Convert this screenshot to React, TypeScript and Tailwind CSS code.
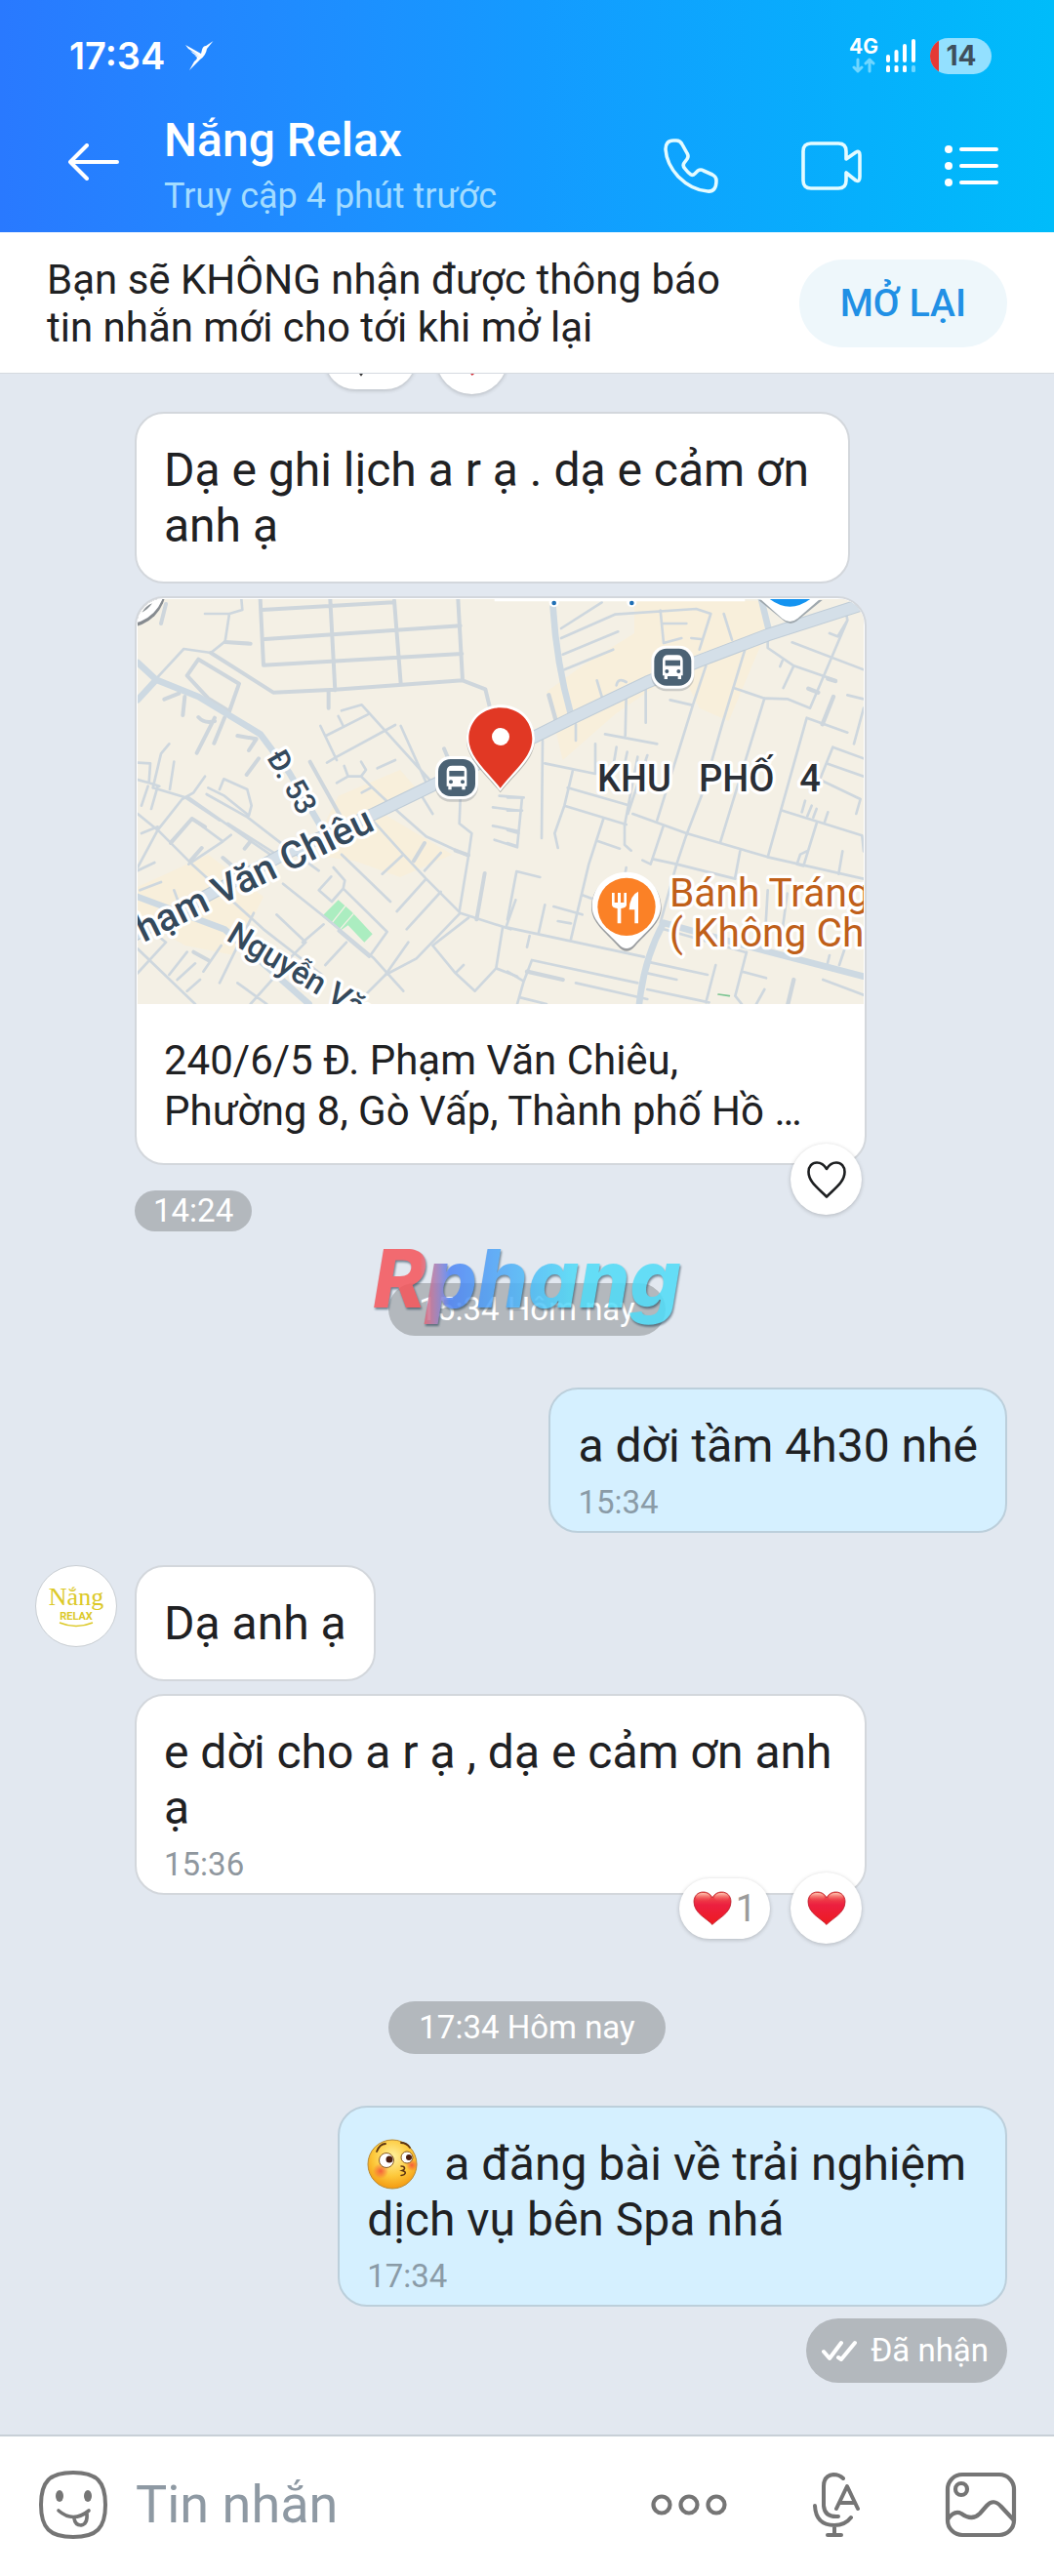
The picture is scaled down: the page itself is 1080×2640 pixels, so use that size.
import React from 'react';

// Outline heart used on the "like" button
const HeartOutline = () => (
  <svg viewBox="0 0 40 38" className="h-[38px] w-[40px]" fill="none" stroke="#1d1f21" strokeWidth="2.6" strokeLinejoin="round">
    <path d="M20 8C17 3 13 1.500 10 1.500C5 1.500 1.500 5.500 1.500 11C1.500 21 11 27.500 20 36.500C29 27.500 38.500 21 38.500 11C38.500 5.500 35 1.500 30 1.500C27 1.500 23 3 20 8Z" />
  </svg>
);

const RedHeart = () => (
  <svg viewBox="0 0 40 35" className="h-[35px] w-[40px]">
    <defs>
      <linearGradient id="heartBody" x1="0" y1="0" x2="0" y2="1">
        <stop offset="0" stopColor="#f0604f" />
        <stop offset="0.4" stopColor="#ec1f40" />
        <stop offset="1" stopColor="#ee1a1f" />
      </linearGradient>
      <linearGradient id="heartShine" x1="0" y1="0" x2="0" y2="1">
        <stop offset="0" stopColor="#ffc9b5" />
        <stop offset="1" stopColor="#f0404c" stopOpacity="0" />
      </linearGradient>
    </defs>
    <path
      d="M20 34.500C15 28.500 1 23 1 11C1 5 5 1 10.500 1C15 1 18.500 3.500 20 7C21.500 3.500 25 1 29.500 1C35 1 39 5 39 11C39 23 25 28.500 20 34.500Z"
      fill="url(#heartBody)"
      stroke="#b9202c"
      strokeWidth="0.8"
    />
    <ellipse cx="10.500" cy="6.500" rx="7.500" ry="4.500" fill="url(#heartShine)" />
    <ellipse cx="29.500" cy="6.500" rx="7.500" ry="4.500" fill="url(#heartShine)" />
  </svg>
);

const KissEmoji = () => (
  <svg viewBox="0 0 52 52" className="mr-[27px] inline-block h-[52px] w-[52px] align-[-10px]">
    <defs>
      <radialGradient id="face" cx="0.5" cy="0.35" r="0.65">
        <stop offset="0" stopColor="#fff3a0" />
        <stop offset="0.6" stopColor="#fdc83a" />
        <stop offset="1" stopColor="#f39a12" />
      </radialGradient>
      <radialGradient id="blush">
        <stop offset="0" stopColor="#f4533a" stopOpacity="0.9" />
        <stop offset="1" stopColor="#f4533a" stopOpacity="0" />
      </radialGradient>
    </defs>
    <circle cx="26" cy="26" r="25" fill="url(#face)" stroke="#b98a35" strokeWidth="1" />
    <circle cx="14" cy="33" r="8" fill="url(#blush)" />
    <circle cx="46" cy="27" r="6" fill="url(#blush)" />
    <circle cx="20" cy="22" r="7.500" fill="#fff" stroke="#8a5a1c" strokeWidth="1" />
    <circle cx="41" cy="19" r="6" fill="#fff" stroke="#8a5a1c" strokeWidth="1" />
    <circle cx="23" cy="21" r="3.500" fill="#4a1d10" />
    <circle cx="43" cy="19" r="3" fill="#4a1d10" />
    <path d="M10 13C12 8 15 5 19 5M35 4C39 4 42 6 44 9" fill="none" stroke="#5b3312" strokeWidth="1.800" strokeLinecap="round" />
    <path d="M35 28C39 28 40 31 36 32.500C41 33.500 40 37 35 37.500" fill="none" stroke="#5b3312" strokeWidth="1.500" strokeLinecap="round" />
  </svg>
);

const BusMarker = ({ x, y }: { x: number; y: number }) => (
  <g transform={`translate(${x} ${y})`}>
    <rect x="-66" y="-60" width="132" height="134" rx="46" fill="#7d8790" opacity="0.35" />
    <rect x="-66" y="-66" width="132" height="132" rx="46" fill="#fff" />
    <rect x="-57" y="-57" width="114" height="114" rx="38" fill="#4b6274" />
    <path d="M-31 -20Q-31 -37 -14 -37H14Q31 -37 31 -20V26H26V37H16V28H-16V37H-26V26H-31Z" fill="#fff" />
    <rect x="-23" y="-21" width="46" height="17" fill="#4b6274" />
    <circle cx="-18" cy="13" r="6" fill="#4b6274" />
    <circle cx="18" cy="13" r="6" fill="#4b6274" />
  </g>
);

// Static map preview
const MapPreview = () => (
  <svg viewBox="33 45 2232 1245" className="block w-full font-['Roboto',sans-serif]" role="img" aria-label="Bản đồ">
    <rect x="33" y="45" width="2232" height="1245" fill="#f4f0e5" />
    {/* built-up areas */}
    <g fill="#f8efdb">
      <path d="M650 650L840 570L900 640L780 700L1000 830L840 900L700 850L560 830Z" />
      <path d="M33 930L250 830L420 960L330 1140L180 1110L33 1030Z" />
      <path d="M1330 500L1290 330L1400 250L1560 150L1560 50L1960 50L1960 160L1850 420L1760 380L1700 260L1500 400L1340 540Z" />
    </g>
    <path d="M600 1020L650 970L690 1005L755 1075L730 1100L680 1048L655 1065Z" fill="#abedc0" />
    <path d="M629 1042L672 988M655 1060L697 1012" stroke="#f4f0e5" strokeWidth="4" />

    <g fill="none" strokeLinecap="round" strokeLinejoin="round">
      {/* thin lanes, west half */}
      <g stroke="#ced7de" strokeWidth="8">
        <path d="M240 90H315L355 78L352 45M315 90L302 175L258 210L175 198L90 290" />
        <path d="M595 435L645 540M612 465L740 400M645 530L825 432M660 388L722 370L930 600M650 405L665 435M615 548L645 530M842 435L925 620" />
        <path d="M668 558L680 590L645 610M680 590L720 590L735 570L720 545M720 590L750 620L835 700L920 775L1050 835M770 565L825 540M722 640L750 625" />
        <path d="M33 548L72 550L68 610L33 600M130 490L105 520L80 625M145 545L132 630M80 625L180 655L285 725M95 620L75 690M65 620L45 680M68 610L100 620" />
        <path d="M33 705L95 755L170 660L205 640L240 590M95 755L200 860L420 1060L600 1200M45 765L95 745M190 655L375 785L470 850" />
        <path d="M250 625L300 650L375 710L383 680L370 630L298 598L285 630M245 645L370 715L480 800L590 880M310 735L460 830" />
        <path d="M135 790L200 720L295 790L320 770M190 860L295 790M33 870L95 755M33 880L85 855M40 940L105 915M145 940L160 980M390 1010L285 1225" />
        <path d="M635 870L670 910L665 935L630 975L590 940L628 898M665 935L800 1068L745 1145L650 1065M480 920L605 1020L760 1150L850 1250M540 1100L605 1045M610 1170L675 1100M460 1015L550 1100L500 1150" />
        <path d="M760 730L850 830L920 905L1025 1010L1180 1060M850 830L785 890M660 830L810 975M965 825L915 880M920 905L830 1005M965 945L860 1060M1025 1010L890 1150L795 1200L730 1265" />
        <path d="M1025 660L1022 735L1060 765L1050 835L1022 1005M1050 1025L940 1110L1010 1195L1070 1250L1135 1180L1155 1055M1010 1195L1035 1170M1195 970L1165 1055M1135 1180L1200 1205" />
        <path d="M900 640L940 705M1125 685L1200 695M1125 742L1200 758M1130 785L1200 808M1145 650L1220 655" />
        <path d="M33 1120L210 1290M33 1195L120 1100L95 1080M130 1200L185 1130M155 1215L210 1165M185 1250L225 1215M235 1190L290 1110M340 1225L430 1290M380 1290L460 1200M865 1100L795 1200" />
      </g>
      {/* block grid and medium lanes */}
      <g stroke="#ced6dc" strokeWidth="12">
        <path d="M410 45L420 248L1030 213M415 78L820 55M425 168L1025 127M625 45L640 325M822 50L842 305M1018 45L1032 295M258 210L450 332L640 323L1032 295L1102 322L1115 375M620 330V380" />
        <path d="M220 230L345 305L315 390L250 350L185 280ZM270 410L215 518M300 410L268 488M220 408Q240 430 270 420M178 345L172 402M115 353L160 335M340 465L398 475L375 510M405 535L368 585M302 177L380 182" />
        <path d="M563 545L655 710M915 795L882 850M1100 888L1075 1030M240 745L200 720L135 795M230 810L195 850M295 840L330 870M380 790L362 812M120 60L105 120M975 505L990 540M1010 818L1050 832M205 1130L250 1155" />
      </g>
      {/* thin lanes, east half */}
      <g transform="translate(1170 0)" stroke="#ced7de" strokeWidth="8">
        <path d="M165 135L290 55M165 165L330 92L580 75L625 90L590 200M170 215L340 145M175 262L325 200M470 80L480 180M480 120H550M480 180L535 165M565 165L595 168" />
        <path d="M665 90L690 170M730 200L660 430L600 640L550 770M610 250L570 370L460 725M500 355L565 370M275 295L290 345M335 310Q340 285 365 300M365 345L362 465M300 460L460 490M425 320V425M210 430V480" />
        <path d="M108 480L105 780M115 550L270 582M200 575L175 680L145 765L155 810M185 625L370 678M175 680L365 738M270 490V580M335 500L325 560M368 515L350 600M400 530L360 740V800L380 818M430 525L370 705" />
        <path d="M385 705L550 765L800 838L1095 905M480 740L440 860L415 848M295 720L250 860L195 1090M280 790L345 812M450 845L520 860L470 1040M520 860L700 905M550 770L520 860M715 820L700 900" />
        <path d="M695 318L790 350L860 352L930 380L1045 110L1040 80M790 350L655 790M1045 110L1015 160L990 150M800 170V195L880 250L1010 295M875 178L1095 262M880 250L848 318M845 235L838 252" />
        <path d="M920 410L1045 455M920 410L800 838M1045 340L1095 352M1095 380L1065 490M1000 500L1095 535M1000 500L960 600M980 550L1095 590M960 600L1085 660L1072 705M845 695L1090 772L1095 820M950 735L910 865L890 860L900 830L920 820M1030 820L1018 890" />
        <path d="M915 665L905 700M935 680L922 712M950 690L940 716M985 700L975 730M0 1055L420 1145M68 1080L60 1115M28 882L0 1030M28 882L100 900M115 985L95 1075M142 990L230 1015M155 1035L195 1042M230 955L270 970" />
        <path d="M0 1190L50 1220L30 1290M75 1155L400 1225M75 1155L50 1220M210 1225L430 1275M40 1270L120 1290M430 1160L615 1200M430 1195L520 1215M430 1245L620 1285M640 1170L610 1285M735 1130L700 1265L720 1290M720 1190L795 1210M970 1215L1095 1262M790 1245L765 1290" />
        <path d="M480 1060L730 1130M800 940L790 1110M860 950L840 1100M990 1140L980 1180M1040 1110L1020 1170M0 655H45L30 805L0 795M0 695H45M0 755L35 765M365 870L360 900" />
      </g>
      <g transform="translate(1170 0)" stroke="#ced6dc" strokeWidth="13">
        <path d="M127 340L148 415M925 320L955 332M985 290L1008 297M1002 345L968 430M60 1190L170 1215M880 1215L862 1290" />
      </g>
      {/* streets */}
      <g stroke="#cdd9e2" strokeWidth="20">
        <path d="M33 240L90 293L220 345L410 460L500 580L600 750M90 293L33 355M33 960L300 1060L560 1290" />
        <path d="M1310 70Q1320 240 1365 400M1950 45L1972 135M1575 1290Q1590 1150 1650 1040L1900 1110L2265 1205" />
      </g>
      <path d="M0 1090L480 830L760 705L945 615L1260 465L1370 410L1600 300L1760 235L1970 155L2280 55" stroke="#bfccd7" strokeWidth="40" />
      <path d="M0 1090L480 830L760 705L945 615L1260 465L1370 410L1600 300L1760 235L1970 155L2280 55" stroke="#d4dfe8" strokeWidth="34" />
      <path d="M1818 1260L1852 1265" stroke="#7cc592" strokeWidth="5" />
    </g>

    {/* markers cut by the top edge */}
    <circle cx="0" cy="12" r="120" fill="#868b90" />
    <circle cx="0" cy="5" r="116" fill="#fff" />
    <path d="M46 86Q66 76 78 58Q58 66 46 86Z" fill="#8c9296" />
    <path d="M1130 45H1900V52H1130Z" fill="#fff" />
    <circle cx="1313" cy="55" r="15" fill="#fff" />
    <circle cx="1552" cy="55" r="15" fill="#fff" />
    <circle cx="1313" cy="57" r="7" fill="#1f6fb5" />
    <circle cx="1552" cy="57" r="7" fill="#1f6fb5" />
    <path d="M1942 48L2020 112Q2040 128 2060 112L2138 48Z" fill="#9fa8ae" />
    <path d="M1942 40L2014 104Q2038 124 2062 104L2136 40Z" fill="#fff" />
    <path d="M1975 44Q2038 92 2102 44Z" fill="#1493f0" />

    <g fill="#34495c" stroke="#fff" strokeWidth="20" strokeLinejoin="round" paintOrder="stroke" fontWeight="500">
      <text transform="translate(428 532) rotate(60)" fontSize="92">Đ. 53</text>
      <text transform="translate(-16 1134) rotate(-26)" fontSize="118">Phạm Văn Chiêu</text>
      <text transform="translate(302 1092) rotate(31)" fontSize="98">Nguyễn Văn</text>
    </g>
    <g fill="#2b2f36" stroke="#fff" strokeWidth="20" strokeLinejoin="round" paintOrder="stroke" fontWeight="500" fontSize="114">
      <text y="635">
        <tspan x="1446">KHU</tspan> <tspan x="1758">PHỐ</tspan> <tspan x="2068">4</tspan>
      </text>
    </g>
    <g fill="#c0601a" stroke="#fff" strokeWidth="20" strokeLinejoin="round" paintOrder="stroke" fontSize="122">
      <text x="1668" y="990">Bánh Tráng</text>
      <text x="1668" y="1113">( Không Ch</text>
    </g>

    <BusMarker x={1014} y={594} />
    <BusMarker x={1678} y={254} />

    {/* place pin */}
    <path d="M1536 888C1595 888 1643 934 1643 994C1643 1040 1600 1070 1562 1112Q1536 1142 1510 1112C1472 1070 1428 1040 1428 994C1428 934 1477 888 1536 888Z" fill="#9a9da0" />
    <path d="M1536 884C1595 884 1641 930 1641 990C1641 1035 1598 1066 1560 1106Q1536 1132 1512 1106C1474 1066 1430 1035 1430 990C1430 930 1477 884 1536 884Z" fill="#fff" />
    <circle cx="1536" cy="991" r="89" fill="#fb8126" />
    <path d="M1491 948V985Q1491 994 1508 996V1042H1519V996Q1536 994 1536 985V948H1528V978H1518V948H1509V978H1499V948ZM1572 944Q1546 955 1544 1000H1561V1042H1572Z" fill="#fff" />

    {/* selected location */}
    <path d="M1148 374C1210 374 1254 420 1254 478C1254 540 1190 585 1148 640C1106 585 1044 540 1044 478C1044 420 1088 374 1148 374Z" fill="#8d8d88" opacity="0.6" />
    <path d="M1148 370C1210 370 1254 416 1254 474C1254 534 1190 580 1148 636C1106 580 1044 534 1044 474C1044 416 1088 370 1148 370Z" fill="#fff" />
    <path d="M1148 379C1205 379 1246 420 1246 474C1246 530 1190 572 1148 626C1106 572 1051 530 1051 474C1051 420 1092 379 1148 379Z" fill="#e13824" />
    <circle cx="1149" cy="468" r="27" fill="#fff" />
  </svg>
);

const ReactionBar = ({ children }: { children: React.ReactNode }) => (
  <div className="flex items-center gap-[21px]">{children}</div>
);

const ReactionCount = ({ children }: { children: React.ReactNode }) => (
  <button className="flex h-[62px] min-w-[93px] items-center justify-center gap-1 rounded-full bg-white text-[38px] leading-none text-[#9b9b9b] shadow-[0_1px_4px_rgba(0,0,0,0.22)]">
    {children}
  </button>
);

const ReactionButton = ({ label, children }: { label: string; children: React.ReactNode }) => (
  <button aria-label={label} className="flex size-[73px] items-center justify-center rounded-full bg-white shadow-[0_1px_4px_rgba(0,0,0,0.22)]">
    {children}
  </button>
);

interface BubbleProps {
  children: React.ReactNode;
  time?: string;
  mine?: boolean;
  reactions?: React.ReactNode;
}

const Bubble = ({ children, time, mine, reactions }: BubbleProps) => (
  <div
    className={`relative w-fit max-w-[750px] rounded-[30px] border-2 px-7 pt-[29px] ${time ? 'pb-[9px]' : 'pb-[29px]'} ${
      mine ? 'border-[#bccfdb] bg-[#d5f0ff]' : 'border-[#d3d7dc] bg-white'
    }`}
  >
    <p className="text-[48px] leading-[57px] whitespace-pre-line text-[#1f2123]">{children}</p>
    {time && <time className={`mt-[10px] block text-[33px] leading-[40px] ${mine ? 'text-[#8a9ba7]' : 'text-[#8f979e]'}`}>{time}</time>}
    {reactions && <div className="absolute right-[3px] -bottom-[52px]">{reactions}</div>}
  </div>
);

const DayChip = ({ children }: { children: React.ReactNode }) => (
  <span className="rounded-full bg-[#b3b8bd] px-[31px] text-[33px] leading-[54px] text-white">{children}</span>
);

const Header = () => (
  <header className="bg-linear-to-r from-[#2979ff] via-[#149aff] to-[#00bcfa] text-white">
    <div className="flex h-[114px] items-center pr-16 pl-[71px]">
      <span className="font-['Inter',sans-serif] text-[38px] leading-none font-semibold">17:34</span>
      <svg viewBox="0 0 30 30" className="ml-5 h-[30px] w-[30px]" fill="#fff">
        <path d="M29.500 0L22 5Q19 5 18 9L17 13L1 4L4 8L15 15L6 10L9 13L16 17L10 14L13 17Q13 19 10 21L5 30L16 19Q22 15 23 8Z" />
      </svg>
      <div className="ml-auto flex items-center">
        <div className="flex flex-col items-center">
          <span className="font-['Inter',sans-serif] text-[21px] leading-[18px] font-bold">4G</span>
          <svg viewBox="0 0 24 16" className="mt-0.5 h-4 w-6" fill="none" stroke="#6fd6ff" strokeWidth="3" strokeLinecap="round" strokeLinejoin="round">
            <path d="M6 2V14M2 10L6 14L10 10M18 14V2M14 6L18 2L22 6" />
          </svg>
        </div>
        <svg viewBox="0 0 30 34" className="ml-2 h-[34px] w-[30px]" fill="#fff">
          <rect x="0" y="16" width="4" height="8" rx="2" />
          <rect x="8.500" y="11" width="4" height="13" rx="2" />
          <rect x="17" y="5" width="4" height="19" rx="2" />
          <rect x="26" y="0" width="4" height="24" rx="2" />
          <rect x="0" y="27" width="4" height="7" rx="1.500" />
          <rect x="8.500" y="27" width="4" height="7" rx="1.500" />
          <rect x="17" y="27" width="4" height="7" rx="1.500" />
          <rect x="26" y="27" width="4" height="7" rx="1.500" fill="#6fd6ff" />
        </svg>
        <div className="ml-[15px] flex h-[37px] w-[63px] overflow-hidden rounded-full bg-[#93e0ff]">
          <div className="w-[9px] bg-[#e53935]" />
          <span className="flex-1 pr-2 text-center font-['Inter',sans-serif] text-[28px] leading-[37px] font-bold text-[#3f4f5c]">14</span>
        </div>
      </div>
    </div>

    <div className="flex h-[124px] items-start pr-14 pl-[70px]">
      <button aria-label="Quay lại" className="mt-[33px]">
        <svg viewBox="0 0 52 38" className="h-[38px] w-[52px]" fill="none" stroke="#fff" strokeWidth="4" strokeLinecap="round" strokeLinejoin="round">
          <path d="M50 19H2M19 2L2 19L19 36" />
        </svg>
      </button>
      <div className="ml-[46px] flex-1">
        <h1 className="mt-[2px] text-[48px] leading-[56px] font-medium">Nắng Relax</h1>
        <p className="text-[36px] leading-[58px] text-[#a3dcff]">Truy cập 4 phút trước</p>
      </div>
      <div className="mt-7 flex items-center">
        <button aria-label="Gọi thoại">
          <svg viewBox="0 0 56 56" className="h-14 w-14" fill="none" stroke="#e4fbff" strokeWidth="3.600" strokeLinejoin="round">
            <path d="M10 2H13Q17 2 19 6L24 15Q26 18 24 21L21 25Q19 28 22 31Q25 35 28 37Q30 38 32 36L35 33Q38 31 41 33L50 37Q54 39 54 43Q54 55 45 54Q29 53 15 39Q3 26 2 11Q2 2 10 2Z" />
          </svg>
        </button>
        <button aria-label="Gọi video" className="ml-[85px]">
          <svg viewBox="0 0 62 50" className="h-[50px] w-[62px]" fill="none" stroke="#e4fbff" strokeWidth="3.600" strokeLinejoin="round">
            <path d="M10 2H38Q46 2 46 10V18L56 11Q60 9 60 14V36Q60 42 56 40L46 32V40Q46 48 38 48H10Q2 48 2 40V10Q2 2 10 2Z" />
          </svg>
        </button>
        <button aria-label="Tùy chọn" className="ml-[85px]">
          <svg viewBox="0 0 56 42" className="h-[42px] w-14" fill="#fff" stroke="#fff" strokeLinecap="round">
            <circle cx="4" cy="4" r="4" stroke="none" />
            <circle cx="4" cy="21" r="4" stroke="none" />
            <circle cx="4" cy="38" r="4" stroke="none" />
            <path d="M17 4H53M17 21H53M17 38H53" strokeWidth="4" />
          </svg>
        </button>
      </div>
    </div>
  </header>
);

const MuteNotice = () => (
  <section className="flex items-center justify-between gap-6 border-b border-[#d5dae0] bg-white pt-6 pr-12 pb-[22px] pl-12">
    <p className="max-w-[700px] text-[42px] leading-[49px] text-[#1f2123]">
      Bạn sẽ KHÔNG nhận được thông báo tin nhắn mới cho tới khi mở lại
    </p>
    <button className="h-[90px] shrink-0 rounded-full bg-[#eef7fb] px-[42px] text-[39px] leading-none font-medium text-[#2190e5]">MỞ LẠI</button>
  </section>
);

const Avatar = () => (
  <div className="flex size-[84px] shrink-0 flex-col items-center rounded-full border border-[#c9ced3] bg-white pt-[18px] text-[#dcc928]">
    <span className="font-['Liberation_Serif',serif] text-[26px] leading-[28px]">Nắng</span>
    <span className="text-[11px] leading-[11px] font-bold">RELAX</span>
    <svg viewBox="0 0 36 6" className="h-1.5 w-9" fill="none" stroke="currentColor" strokeWidth="1.500">
      <path d="M1 1Q18 8 35 1" />
    </svg>
  </div>
);

const Composer = () => (
  <footer className="flex h-[145px] items-center border-t-2 border-[#c8d0d7] bg-white pr-[38px] pb-1 pl-[39px]">
    <button aria-label="Biểu cảm">
      <svg viewBox="0 0 72 72" className="size-[72px]" fill="none" stroke="#757575" strokeWidth="4" strokeLinecap="round">
        <path d="M36 3C60 3 69 12 69 36C69 60 60 69 36 69C12 69 3 60 3 36C3 12 12 3 36 3Z" />
        <ellipse cx="22" cy="27" rx="4" ry="6" fill="#757575" stroke="none" />
        <ellipse cx="51" cy="27" rx="4" ry="6" fill="#757575" stroke="none" />
        <path d="M21 42Q36 55 52 42M37 50Q38 57 44 57Q51 56 50 45" strokeWidth="3.600" />
      </svg>
    </button>
    <input
      aria-label="Tin nhắn"
      placeholder="Tin nhắn"
      className="mx-7 min-w-0 flex-1 bg-transparent text-[54px] leading-[64px] outline-none placeholder:text-[#8e99a3]"
    />
    <button aria-label="Thêm">
      <svg viewBox="0 0 78 22" className="h-[22px] w-[78px]" fill="none" stroke="#757575" strokeWidth="4.200">
        <circle cx="11" cy="11" r="8.500" />
        <circle cx="39" cy="11" r="8.500" />
        <circle cx="67" cy="11" r="8.500" />
      </svg>
    </button>
    <button aria-label="Ghi âm" className="ml-[88px]">
      <svg viewBox="0 0 48 66" className="h-[66px] w-12" fill="none" stroke="#757575" strokeWidth="4" strokeLinecap="round" strokeLinejoin="round">
        <path d="M31 6Q27 2 21 2Q11 3 11 14V34Q12 46 26 45M2 34Q3 54 22 54Q33 54 39 46M22 54V64M15 64H29M24 37L35 14L46 37M27 31H43" />
      </svg>
    </button>
    <button aria-label="Gửi ảnh" className="ml-[87px]">
      <svg viewBox="0 0 74 68" className="h-[68px] w-[74px]" fill="none" stroke="#757575" strokeWidth="4.200" strokeLinejoin="round">
        <rect x="3" y="3" width="68" height="62" rx="15" />
        <circle cx="17" cy="18" r="6" />
        <path d="M3 49Q10 39 17 43Q28 51 36 43L43 35Q50 27 58 36L71 50" />
      </svg>
    </button>
  </footer>
);

const App = () => {
  return (
    <div className="flex min-h-screen flex-col bg-[#e2e8f0] font-['Roboto',sans-serif]">
      <Header />
      <MuteNotice />

      <main className="flex flex-1 flex-col overflow-hidden pr-12 pl-9">
        {/* Reactions of the message scrolled out above */}
        <div className="-mt-[52px] ml-[297px]">
          <ReactionBar>
            <ReactionCount>
              <svg viewBox="0 0 36 36" className="mr-5 h-9 w-9" fill="none" stroke="#333" strokeWidth="2">
                <path d="M4 14L18 34L32 14Z" />
              </svg>
            </ReactionCount>
            <ReactionButton label="Thả tim">
              <RedHeart />
            </ReactionButton>
          </ReactionBar>
        </div>

        <div className="mt-[18px] ml-[102px] flex flex-col items-start gap-[13px]">
          <Bubble>{'Dạ e ghi lịch a r ạ . dạ e cảm ơn\u00a0\nanh ạ'}</Bubble>

          {/* Shared location */}
          <div className="relative w-full max-w-[750px]">
            <a href="#location" className="block overflow-hidden rounded-[30px] border-2 border-[#d3d7dc] bg-white">
              <div className="overflow-hidden rounded-t-[28px] p-px">
                <MapPreview />
              </div>
              <p className="px-7 pt-[31px] pb-[27px] text-[42px] leading-[52px] text-[#1f2123]">
                240/6/5 Đ. Phạm Văn Chiêu,
                <br />
                Phường 8, Gò Vấp, Thành phố Hồ …
              </p>
            </a>
            <div className="absolute right-[5px] -bottom-[51px]">
              <ReactionButton label="Thích">
                <HeartOutline />
              </ReactionButton>
            </div>
          </div>
        </div>

        <time className="mt-[26px] ml-[102px] self-start rounded-full bg-[#b3b8bd] px-[19px] text-[33px] leading-[42px] text-white">14:24</time>

        <div className="relative mt-[53px] -mr-3 flex justify-center">
          <DayChip>15:34 Hôm nay</DayChip>
          <span className="absolute -top-[53px] bg-linear-to-r from-[#f5555a] from-17% via-[#4d83f5] via-26% to-[#4fdcf8] to-65% bg-clip-text px-2 font-['Inter',sans-serif] text-[82px] leading-[98px] font-extrabold text-transparent italic opacity-85 drop-shadow-[1px_2px_1px_rgba(30,60,80,0.7)]">
            Rphang
          </span>
        </div>

        <div className="mt-[53px] flex justify-end">
          <Bubble mine time="15:34">
            a dời tầm 4h30 nhé
          </Bubble>
        </div>

        <div className="mt-[33px] flex items-start gap-[18px]">
          <Avatar />
          <div className="flex min-w-0 flex-1 flex-col gap-[13px]">
            <Bubble>Dạ anh ạ</Bubble>
            <Bubble
              time="15:36"
              reactions={
                <ReactionBar>
                  <ReactionCount>
                    <RedHeart />1
                  </ReactionCount>
                  <ReactionButton label="Thả tim">
                    <RedHeart />
                  </ReactionButton>
                </ReactionBar>
              }
            >
              e dời cho a r ạ , dạ e cảm ơn anh ạ
            </Bubble>
          </div>
        </div>

        <div className="mt-[109px] -mr-3 flex justify-center">
          <DayChip>17:34 Hôm nay</DayChip>
        </div>

        <div className="mt-[53px] flex flex-col items-end gap-3 pb-[53px]">
          <Bubble mine time="17:34">
            <KissEmoji />
            {'a đăng bài về trải nghiệm\u00a0\ndịch vụ bên Spa nhá'}
          </Bubble>
          <div className="flex h-[66px] items-center rounded-full bg-[#b3b8bd] pr-[19px] pl-4 text-[33px] text-white">
            <svg viewBox="0 0 36 22" className="mr-3.5 h-[22px] w-9" fill="none" stroke="#fff" strokeWidth="4" strokeLinecap="round" strokeLinejoin="round">
              <path d="M2 12L8 19L20 3M17 18L20 20L34 3" />
            </svg>
            Đã nhận
          </div>
        </div>
      </main>

      <Composer />
    </div>
  );
};

export default App;
